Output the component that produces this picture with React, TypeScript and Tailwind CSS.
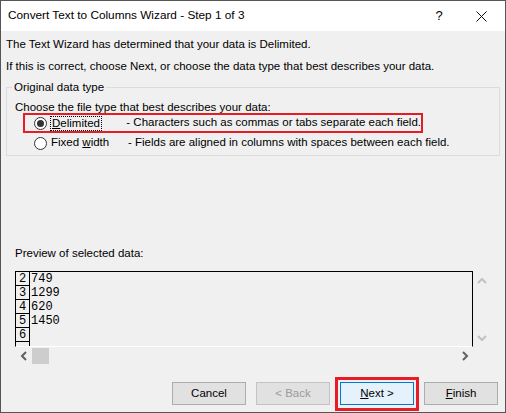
import React from 'react';

const font = { fontFamily: '"Liberation Sans", Arial, sans-serif' };

const Radio: React.FC<{ checked?: boolean }> = ({ checked }) => (
  <span className="w-[13px] h-[13px] rounded-full border border-[#333] bg-white flex items-center justify-center shrink-0">
    {checked && <span className="w-[7px] h-[7px] rounded-full bg-[#333]" />}
  </span>
);

const Btn: React.FC<{ children: React.ReactNode; disabled?: boolean; primary?: boolean }> = ({
  children,
  disabled,
  primary,
}) => (
  <button
    className={
      primary
        ? 'w-[74px] h-[23px] bg-[#e5f1fb] border border-[#0078d7] text-[11.5px] text-black'
        : disabled
        ? 'w-[74px] h-[23px] bg-[#e1e1e1] border border-[#c4c4c4] text-[11.5px] text-[#9a9a9a]'
        : 'w-[74px] h-[23px] bg-[#e1e1e1] border border-[#adadad] text-[11.5px] text-black'
    }
  >
    {children}
  </button>
);

const Chevron: React.FC<{ dir: 'up' | 'down' | 'left' | 'right'; color: string }> = ({ dir, color }) => {
  const d = {
    up: 'M1 6 L5 2 L9 6',
    down: 'M1 2 L5 6 L9 2',
    left: 'M6 1 L2 5 L6 9',
    right: 'M2 1 L6 5 L2 9',
  }[dir];
  const vert = dir === 'up' || dir === 'down';
  return (
    <svg width={vert ? 10 : 8} height={vert ? 8 : 10} viewBox={vert ? '0 0 10 8' : '0 0 8 10'}>
      <path d={d} fill="none" stroke={color} strokeWidth="2" />
    </svg>
  );
};

const rows = [
  { n: '2', v: '749' },
  { n: '3', v: '1299' },
  { n: '4', v: '620' },
  { n: '5', v: '1450' },
  { n: '6', v: '' },
  { n: '', v: '' },
];

export default function App() {
  return (
    <div
      className="w-[506px] h-[413px] border border-[#555] bg-[#f0f0f0] flex flex-col text-black text-[11.5px] overflow-hidden whitespace-nowrap"
      style={font}
    >
      {/* title bar */}
      <div className="h-[30px] bg-white flex items-center shrink-0">
        <span className="pl-[7px] text-[11.8px] flex-1">Convert Text to Columns Wizard - Step 1 of 3</span>
        <span className="w-[20px] text-center text-[13px] mr-[27px]">?</span>
        <svg width="11" height="11" viewBox="0 0 11 11" className="mr-[18px]">
          <path d="M0.5 0.5 L10.5 10.5 M10.5 0.5 L0.5 10.5" stroke="#111" strokeWidth="1" />
        </svg>
      </div>

      <div className="flex flex-col">
        <p className="mt-[5px] ml-[5px] leading-[16px]">The Text Wizard has determined that your data is Delimited.</p>
        <p className="mt-[6px] ml-[5px] leading-[16px]">
          If this is correct, choose Next, or choose the data type that best describes your data.
        </p>

        <fieldset className="mt-[5px] mx-[5px] border border-[#dcdcdc] pb-[2px]">
          <legend className="ml-[5px] px-[2px] leading-[16px]">Original data type</legend>
          <div className="pl-[8px] pt-[5px]">
            <div className="h-[14px] leading-[14px]">Choose the file type that best describes your data:</div>
            <div className="-mt-[1px] ml-[8px] w-[400px] h-[20px] border-2 border-[#e81c24] flex items-center pl-[9px]">
              <Radio checked />
              <span className="ml-[3px] w-[78px] flex">
                <span className="border border-dotted border-black px-[1px] leading-[13px]">
                  <span className="underline">D</span>elimited
                </span>
              </span>
              <span>- Characters such as commas or tabs separate each field.</span>
            </div>
            <div className="ml-[8px] h-[20px] flex items-center pl-[11px]">
              <Radio />
              <span className="ml-[4px] w-[77px]">
                Fixed <span className="underline">w</span>idth
              </span>
              <span>- Fields are aligned in columns with spaces between each field.</span>
            </div>
          </div>
        </fieldset>

        <p className="mt-[89px] ml-[14px] leading-[16px]">Preview of selected data:</p>

        {/* preview */}
        <div className="mt-[10px] ml-[14px] w-[475px] h-[93px] grid grid-cols-[458px_17px] grid-rows-[76px_17px]">
          <div
            className="border-l border-t border-r border-black border-b border-b-white overflow-hidden"
            style={{ fontFamily: '"Liberation Mono", "Courier New", monospace' }}
          >
            {rows.map((r, i) => (
              <div key={i} className="flex h-[14px] text-[12px] leading-[14px]">
                <span className="w-[14px] border-r border-b border-black text-center shrink-0">{r.n}</span>
                <span className="pl-[1px]">{r.v}</span>
              </div>
            ))}
          </div>
          <div className="flex flex-col items-center justify-between pt-[6px] pb-[5px]">
            <Chevron dir="up" color="#c2c2c2" />
            <Chevron dir="down" color="#c2c2c2" />
          </div>
          <div className="flex items-center">
            <div className="w-[17px] flex justify-center">
              <Chevron dir="left" color="#606060" />
            </div>
            <div className="w-[17px] h-[16px] bg-[#cdcdcd]" />
            <div className="flex-1" />
            <div className="w-[17px] flex justify-center">
              <Chevron dir="right" color="#606060" />
            </div>
          </div>
          <div />
        </div>

        {/* buttons */}
        <div className="mt-[18px] flex justify-end gap-[10px] pr-[7px]">
          <Btn>Cancel</Btn>
          <Btn disabled>&lt; Back</Btn>
          <div className="relative">
            <Btn primary>
              <span className="underline">N</span>ext &gt;
            </Btn>
            <div className="absolute -top-[5px] -bottom-[6px] -left-[5px] -right-[5px] border-[3px] border-[#e81c24] pointer-events-none" />
          </div>
          <Btn>
            <span className="underline">F</span>inish
          </Btn>
        </div>
      </div>
    </div>
  );
}
